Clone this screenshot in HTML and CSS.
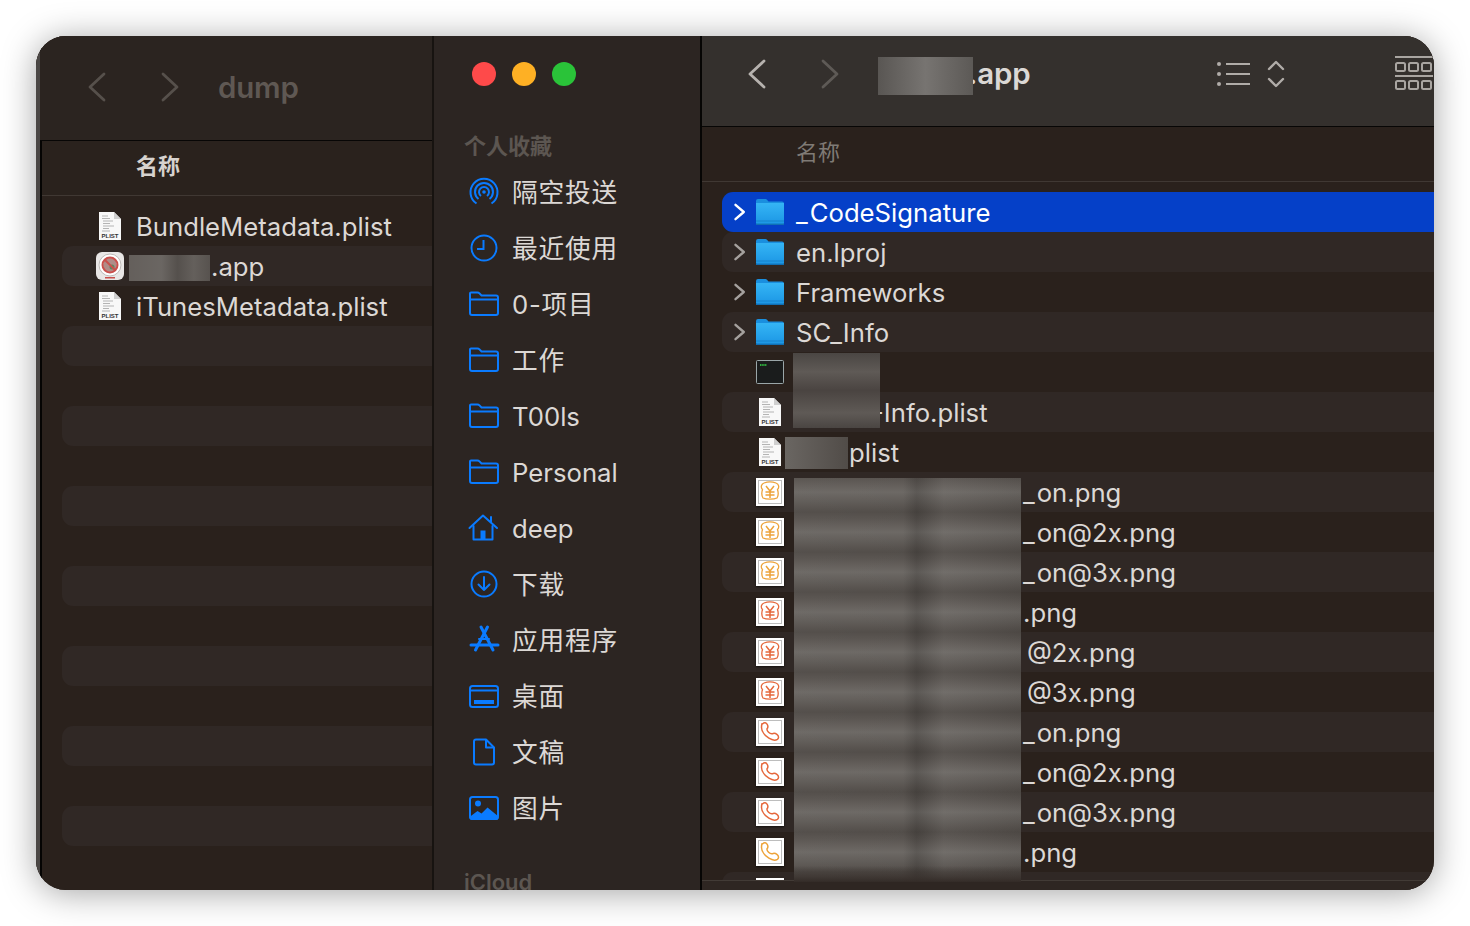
FILE: index.html
```html
<!DOCTYPE html>
<html lang="zh">
<head>
<meta charset="utf-8">
<title>Finder</title>
<link rel="stylesheet" href="styles.css">
</head>
<body>
<svg class="defs" width="0" height="0" aria-hidden="true">
  <defs>
    <linearGradient id="fg" x1="0" y1="0" x2="0" y2="1"><stop offset="0" stop-color="#35b5f5"/><stop offset="1" stop-color="#1b95e4"/></linearGradient>
    <symbol id="folder" viewBox="0 0 28 28">
      <path d="M0 3a2 2 0 0 1 2-2h7.500a2 2 0 0 1 1.500.7L12.500 3.500H26a2 2 0 0 1 2 2v2H0z" fill="#1a8fdf"/>
      <path d="M0 5h28v20a2 2 0 0 1-2 2H2a2 2 0 0 1-2-2z" fill="url(#fg)"/>
      <rect y="22.500" width="28" height="1" fill="#1780cc"/>
      <rect y="25.600" width="28" height="1.400" fill="#0f6fb5"/>
    </symbol>
    <symbol id="plist" viewBox="0 0 28 30">
      <path d="M3 1h15l7 7v21H3z" fill="#f8f8f8"/>
      <path d="M18 1l7 7h-7z" fill="#cfcfcf"/>
      <path d="M6 5h6M6 7.500h8M7 10h10M7 12.500h7M7 15h11M7 17.500h6M6 20h8" stroke="#b4b4b4" stroke-width="1"/>
      <text x="14" y="27" text-anchor="middle" class="plist-label">PLIST</text>
    </symbol>
    <symbol id="yen" viewBox="0 0 28 28">
      <rect width="28" height="28" fill="#fff"/>
      <rect x="2.500" y="2.500" width="23" height="23" fill="none" stroke="#bdbdbd"/>
      <path d="M8 5c4-1.500 8-1.500 12 0 3 1 3.500 4.500 1.500 6.500 1 3 1 6-.5 8.500-3 1.500-11 1.500-14 0-1.500-2.500-1.500-5.500-.5-8.500-2-2-1.500-5.500 1.500-6.500z" fill="none" stroke="currentColor" stroke-width="1.300"/>
      <path d="M10 8l4 5 4-5M9.500 14h9M9.500 17h9M14 13v7" fill="none" stroke="currentColor" stroke-width="1.500"/>
    </symbol>
    <symbol id="phone" viewBox="0 0 28 28">
      <rect width="28" height="28" fill="#fff"/>
      <rect x="2.500" y="2.500" width="23" height="23" fill="none" stroke="#bdbdbd"/>
      <path d="M6.500 5.800c1.800-1.500 3.800-1.300 4.800.7 .8 1.600 .8 3.200-.3 4.300-.3 2.200 2.700 5.300 5.200 5 1.500-.8 3.200-.6 4.700.5 2.100 1.500 2.100 3.900 .5 5-2.100 1.300-5.300.9-8.500-1.100-4.300-2.800-7.400-6.800-7.400-10.700 0-1.500 .2-2.700 .5-3.700z" fill="none" stroke="currentColor" stroke-width="1.500"/>
    </symbol>
    <symbol id="chev-r" viewBox="0 0 14 18"><path d="M2.500 1.800L10.800 9l-8.300 7.200" fill="none" stroke="currentColor" stroke-width="2.400" stroke-linecap="round" stroke-linejoin="round"/></symbol>
    <symbol id="nav-l" viewBox="0 0 20 32"><path d="M17 3L3 16l14 13" fill="none" stroke="currentColor" stroke-width="2.800" stroke-linecap="round" stroke-linejoin="round"/></symbol>
    <symbol id="nav-r" viewBox="0 0 20 32"><path d="M3 3l14 13L3 29" fill="none" stroke="currentColor" stroke-width="2.800" stroke-linecap="round" stroke-linejoin="round"/></symbol>
    <symbol id="side-folder" viewBox="0 0 32 32"><path d="M3 4.500h6.500c.8 0 1.400.3 2 .9L13.500 7.500H28a2 2 0 0 1 2 2V25a2 2 0 0 1-2 2H4a2 2 0 0 1-2-2V5.500a1 1 0 0 1 1-1zM2 11.500h28" fill="none" stroke="currentColor" stroke-width="2"/></symbol>
  </defs>
</svg>

<main class="window">
  <section class="pane pane-left">
    <header class="toolbar toolbar-left">
      <svg class="nav nav-dim nav-a"><use href="#nav-l"/></svg>
      <svg class="nav nav-dim nav-b"><use href="#nav-r"/></svg>
      <h1 class="title title-dim">dump</h1>
    </header>
    <div class="colhead colhead-left">名称</div>
    <div class="list list-left">
      <div class="row row-l"><svg class="ico plist-ico"><use href="#plist"/></svg><span class="name">BundleMetadata.plist</span></div>
      <div class="row row-l stripe">
        <svg class="ico" viewBox="0 0 28 28">
          <rect width="28" height="28" rx="6" fill="#e9e7e6"/>
          <circle cx="14" cy="13" r="11" fill="#fff" stroke="#bdb9b7"/>
          <circle cx="14" cy="13" r="7" fill="#b08c88"/>
          <circle cx="16" cy="15" r="2.500" fill="#5c8a62"/>
          <circle cx="14" cy="13" r="7.500" fill="none" stroke="#c9504c" stroke-width="2"/>
          <path d="M9 8l10 10" stroke="#c9504c" stroke-width="2"/>
          <rect x="9" y="25" width="10" height="1.500" fill="#c9504c"/>
        </svg>
        <span class="name name-app">.app</span>
      </div>
      <div class="row row-l"><svg class="ico plist-ico"><use href="#plist"/></svg><span class="name">iTunesMetadata.plist</span></div>
      <div class="row row-l stripe"></div>
      <div class="row row-l"></div>
      <div class="row row-l stripe"></div>
      <div class="row row-l"></div>
      <div class="row row-l stripe"></div>
      <div class="row row-l"></div>
      <div class="row row-l stripe"></div>
      <div class="row row-l"></div>
      <div class="row row-l stripe"></div>
      <div class="row row-l"></div>
      <div class="row row-l stripe"></div>
      <div class="row row-l"></div>
      <div class="row row-l stripe"></div>
    </div>
    <div class="redact redact-left"></div>
  </section>

  <nav class="sidebar">
    <div class="lights"><i class="light red"></i><i class="light yellow"></i><i class="light green"></i></div>
    <div class="side-label">个人收藏</div>
    <a class="side-item"><svg class="side-ico" viewBox="0 0 32 32" fill="none" stroke="currentColor" stroke-width="2"><path d="M8.500 27.500a13.500 13.500 0 1 1 15 0"/><path d="M10.500 23a9 9 0 1 1 11 0"/><path d="M13 20a5 5 0 1 1 6 0"/><circle cx="16" cy="16" r="1.800" fill="currentColor" stroke="none"/></svg>隔空投送</a>
    <a class="side-item"><svg class="side-ico" viewBox="0 0 32 32" fill="none" stroke="currentColor" stroke-width="2"><circle cx="16" cy="16" r="12.500"/><path d="M15.500 8v9H9"/></svg>最近使用</a>
    <a class="side-item"><svg class="side-ico"><use href="#side-folder"/></svg>0-项目</a>
    <a class="side-item"><svg class="side-ico"><use href="#side-folder"/></svg>工作</a>
    <a class="side-item latin"><svg class="side-ico"><use href="#side-folder"/></svg>T00ls</a>
    <a class="side-item latin"><svg class="side-ico"><use href="#side-folder"/></svg>Personal</a>
    <a class="side-item latin"><svg class="side-ico" viewBox="0 0 32 32" fill="none" stroke="currentColor" stroke-width="2" stroke-linecap="round" stroke-linejoin="round"><path d="M1.500 16L15 3.500 29 16"/><path d="M5.500 14v13.500h19V14"/><path d="M23 5v5"/><rect x="12.500" y="18.500" width="5" height="9" fill="currentColor" stroke="none"/></svg>deep</a>
    <a class="side-item"><svg class="side-ico" viewBox="0 0 32 32" fill="none" stroke="currentColor" stroke-width="2" stroke-linecap="round" stroke-linejoin="round"><circle cx="16" cy="16" r="12.500"/><path d="M16 9v13M10.500 16.500L16 22l5.500-5.500"/></svg>下载</a>
    <a class="side-item"><svg class="side-ico" viewBox="0 0 32 32" fill="none" stroke="currentColor" stroke-linecap="round"><path d="M19.500 3L7.500 26" stroke-width="3"/><path d="M13 3l12 23" stroke-width="3"/><path d="M3 21h27" stroke-width="3"/><path d="M11 15h10" stroke-width="2"/></svg>应用程序</a>
    <a class="side-item"><svg class="side-ico" viewBox="0 0 32 32" fill="none" stroke="currentColor" stroke-width="2"><rect x="2" y="6" width="28" height="21" rx="2.500"/><path d="M2 10.500h28"/><rect x="6" y="20" width="20" height="4" fill="currentColor" stroke="none"/></svg>桌面</a>
    <a class="side-item"><svg class="side-ico" viewBox="0 0 32 32" fill="none" stroke="currentColor" stroke-width="2" stroke-linejoin="round"><path d="M8 3.500h10l8 8v15a2 2 0 0 1-2 2H8a2 2 0 0 1-2-2v-21a2 2 0 0 1 2-2z"/><path d="M18 3.500v8h8"/></svg>文稿</a>
    <a class="side-item"><svg class="side-ico" viewBox="0 0 32 32"><rect x="2" y="5" width="28" height="22" rx="2.500" fill="none" stroke="currentColor" stroke-width="2"/><circle cx="10" cy="11.500" r="3" fill="currentColor"/><path d="M1.500 25l8-6 4 2.500 6-6 11 9v1a2.500 2.500 0 0 1-2.500 2.500H4A2.500 2.500 0 0 1 1.500 25z" fill="currentColor"/></svg>图片</a>
    <div class="side-label side-label-icloud">iCloud</div>
  </nav>

  <section class="pane pane-right">
    <header class="toolbar toolbar-right">
      <svg class="nav nav-on"><use href="#nav-l"/></svg>
      <svg class="nav nav-off nav-c"><use href="#nav-r"/></svg>
      <h1 class="title title-on">.app</h1>
      <svg class="tool-list" viewBox="0 0 36 26" fill="none" stroke="currentColor" stroke-width="2"><circle cx="3" cy="3" r="2" fill="currentColor" stroke="none"/><circle cx="3" cy="13" r="2" fill="currentColor" stroke="none"/><circle cx="3" cy="23" r="2" fill="currentColor" stroke="none"/><path d="M10 3h24M10 13h24M10 23h24"/></svg>
      <svg class="tool-sort" viewBox="0 0 18 28" fill="none" stroke="currentColor" stroke-width="2.400" stroke-linecap="round" stroke-linejoin="round"><path d="M2 9l7-7 7 7M2 19l7 7 7-7"/></svg>
      <svg class="tool-grid" viewBox="0 0 38 36" fill="none" stroke="currentColor" stroke-width="2"><path d="M0 1h38M0 20h38"/><rect x="1" y="7" width="9" height="8" rx="1.500"/><rect x="14" y="7" width="9" height="8" rx="1.500"/><rect x="27" y="7" width="9" height="8" rx="1.500"/><rect x="1" y="25" width="9" height="8" rx="1.500"/><rect x="14" y="25" width="9" height="8" rx="1.500"/><rect x="27" y="25" width="9" height="8" rx="1.500"/></svg>
    </header>
    <div class="colhead colhead-right">名称</div>
    <div class="list list-right">
      <div class="row row-r selected"><svg class="chev chev-on"><use href="#chev-r"/></svg><svg class="ico"><use href="#folder"/></svg><span class="name"><span class="us">_</span>CodeSignature</span></div>
      <div class="row row-r stripe"><svg class="chev"><use href="#chev-r"/></svg><svg class="ico"><use href="#folder"/></svg><span class="name">en.lproj</span></div>
      <div class="row row-r"><svg class="chev"><use href="#chev-r"/></svg><svg class="ico"><use href="#folder"/></svg><span class="name">Frameworks</span></div>
      <div class="row row-r stripe"><svg class="chev"><use href="#chev-r"/></svg><svg class="ico"><use href="#folder"/></svg><span class="name">SC_Info</span></div>
      <div class="row row-r"><span class="chev"></span><svg class="ico ico-term" viewBox="0 0 28 24"><rect x=".5" y=".5" width="27" height="23" rx="1" fill="#1a1c1c" stroke="#9aa6a8"/><path d="M4 5h7" stroke="#2fae3e" stroke-width="2" stroke-dasharray="1.500 .7"/></svg><span class="name"></span></div>
      <div class="row row-r stripe"><span class="chev"></span><svg class="ico plist-ico"><use href="#plist"/></svg><span class="name name-info">-Info.plist</span></div>
      <div class="row row-r"><span class="chev"></span><svg class="ico plist-ico"><use href="#plist"/></svg><span class="name name-plist">plist</span></div>
      <div class="row row-r stripe"><span class="chev"></span><svg class="ico thumb amber"><use href="#yen"/></svg><span class="name name-long"><span class="us">_</span>on.png</span></div>
      <div class="row row-r"><span class="chev"></span><svg class="ico thumb amber"><use href="#yen"/></svg><span class="name name-long"><span class="us">_</span>on@2x.png</span></div>
      <div class="row row-r stripe"><span class="chev"></span><svg class="ico thumb amber"><use href="#yen"/></svg><span class="name name-long"><span class="us">_</span>on@3x.png</span></div>
      <div class="row row-r"><span class="chev"></span><svg class="ico thumb coral"><use href="#yen"/></svg><span class="name name-long">.png</span></div>
      <div class="row row-r stripe"><span class="chev"></span><svg class="ico thumb coral"><use href="#yen"/></svg><span class="name name-at">@2x.png</span></div>
      <div class="row row-r"><span class="chev"></span><svg class="ico thumb coral"><use href="#yen"/></svg><span class="name name-at">@3x.png</span></div>
      <div class="row row-r stripe"><span class="chev"></span><svg class="ico thumb coral"><use href="#phone"/></svg><span class="name name-long"><span class="us">_</span>on.png</span></div>
      <div class="row row-r"><span class="chev"></span><svg class="ico thumb coral"><use href="#phone"/></svg><span class="name name-long"><span class="us">_</span>on@2x.png</span></div>
      <div class="row row-r stripe"><span class="chev"></span><svg class="ico thumb coral"><use href="#phone"/></svg><span class="name name-long"><span class="us">_</span>on@3x.png</span></div>
      <div class="row row-r"><span class="chev"></span><svg class="ico thumb amber"><use href="#phone"/></svg><span class="name name-long">.png</span></div>
      <div class="row row-r stripe"><span class="chev"></span><svg class="ico thumb amber"><use href="#phone"/></svg><span class="name"></span></div>
    </div>
    <div class="footer"></div>
    <div class="redact redact-title"></div>
    <div class="redact redact-bin"></div>
    <div class="redact redact-plist"></div>
    <div class="redact redact-big"></div>
  </section>
</main>
</body>
</html>
```
FILE: styles.css
```css
* { box-sizing: border-box; }
html, body { margin: 0; height: 926px; overflow: hidden; }
body {
  background: #fff;
  padding: 36px;
  font-family: Inter, "Noto Sans CJK SC", sans-serif;
}
.defs { position: absolute; }
.plist-label { font: 700 6px "Liberation Sans", sans-serif; fill: #333; }

.window {
  display: flex;
  width: 1398px;
  height: 854px;
  border-radius: 30px;
  overflow: hidden;
  background: #2a211c;
  box-shadow: 0 3px 34px rgba(0, 0, 0, .36);
}

.pane { position: relative; display: flex; flex-direction: column; background: #2a211c; }
.pane-left {
  flex: 0 0 396px;
  border-left: 4px solid #4b4745;
}
.pane-left::before {
  content: "";
  position: absolute;
  left: 0; top: 0; bottom: 0;
  width: 2px;
  background: #050403;
}
.pane-right { flex: 1; min-width: 0; border-left: 2px solid #060504; }

.toolbar { position: relative; display: flex; align-items: center; flex: none; }
.toolbar-left { height: 105px; padding: 0 0 2px 47px; background: #2b2420; border-bottom: 1px solid #070605; }
.toolbar-right { height: 91px; padding: 0 0 15px 45px; background: #34302d; border-bottom: 1px solid #070605; }

.nav { width: 20px; height: 32px; flex: none; }
.nav-dim { color: #56504b; }
.nav-on { color: #b6b2ae; }
.nav-off { color: #5e5a56; }
.nav-a { margin-right: 53px; }
.nav-b { margin-right: 38px; }
.nav-c { margin-left: 53px; }
.title { margin: 0; font-size: 29.500px; font-weight: 600; letter-spacing: -.2px; }
.title-dim { color: #5f5853; }
.title-on { color: #dbd8d5; margin: 0 0 2px 128px; width: 248px; }

.tool-list { width: 36px; height: 26px; flex: none; color: #b0aca8; }
.tool-sort { width: 18px; height: 28px; flex: none; margin-left: 15px; color: #b0aca8; }
.tool-grid { width: 38px; height: 36px; flex: none; color: #a9a5a1; margin-left: 110px; }

.colhead { display: flex; align-items: center; flex: none; font-size: 22px; padding-bottom: 8px; border-bottom: 1px solid #403833; }
.colhead-left { height: 55px; padding-left: 96px; color: #d6d2ce; font-weight: 700; background: #2a221d; }
.colhead-right { height: 55px; padding-left: 94px; color: #7f7a75; background: #2a211c; }

.list { flex: 1; min-height: 0; overflow: hidden; padding-top: 10px; }
.list-left { padding-left: 22px; }
.list-right { padding-left: 20px; }
.footer { flex: none; height: 10px; background: #2e2622; border-top: 1px solid #423b36; }

.row {
  display: flex;
  align-items: center;
  height: 40px;
  font-size: 25.700px;
  color: #dcd8d5;
  border-radius: 11px 0 0 11px;
  white-space: nowrap;
}
.stripe { background: #302825; }
.selected { background: #0540c8; color: #fff; }
.row-l { padding-left: 34px; }
.chev { width: 14px; height: 18px; flex: none; margin: 0 9px 0 11px; color: #a5a19e; }
.chev-on { color: #fff; }
.ico { width: 28px; height: 28px; flex: none; display: block; }
.plist-ico { height: 30px; }
.ico-term { height: 24px; }
.thumb { box-shadow: 0 1px 2px rgba(0, 0, 0, .6); }
.amber { color: #eda33a; }
.coral { color: #e5683c; }
.name { margin-left: 12px; }
.us { letter-spacing: 2px; }
.name-app { margin-left: 87px; }
.name-info { margin-left: 88px; }
.name-plist { margin-left: 65px; }
.name-long { margin-left: 239px; }
.name-at { margin-left: 243px; }

.sidebar {
  flex: 0 0 268px;
  display: flex;
  flex-direction: column;
  padding-left: 34px;
  background: #2c2522;
  border-left: 2px solid #171310;
}
.lights { display: flex; gap: 16px; flex: none; padding: 26px 0 0 4px; }
.light { width: 24px; height: 24px; border-radius: 50%; }
.red { background: #fe4a4a; }
.yellow { background: #feb024; }
.green { background: #2ac339; }
.side-label { flex: none; margin: 45px 0 0 -4px; height: 30px; line-height: 30px; font-size: 22px; font-weight: 600; color: #5c5651; }
.side-label-icloud { margin-top: 33px; }
.side-item { display: flex; align-items: center; gap: 12px; flex: none; height: 56px; font-size: 25.700px; letter-spacing: .8px; color: #dcd8d5; }
.side-label + .side-item { margin-top: 1px; }
.side-ico { width: 32px; height: 32px; flex: none; margin-top: 4px; color: #0a7bff; }
.latin { letter-spacing: 0; padding-top: 4px; }
.latin .side-ico { margin-top: 0; }

.redact {
  position: absolute;
  background:
    linear-gradient(90deg, rgba(255,255,255,.05), rgba(255,255,255,.09) 40%, rgba(0,0,0,.08) 60%, rgba(255,255,255,.05) 80%, rgba(0,0,0,.05)),
    #5c5753;
}
.redact-left { left: 89px; top: 219px; width: 81px; height: 26px; }
.redact-title { left: 176px; top: 21px; width: 95px; height: 38px; background: linear-gradient(90deg, #595653, #777471 50%, #5c5956); }
.redact-bin { left: 91px; top: 317px; width: 87px; height: 75px; background: linear-gradient(180deg, #4a4643, #5f5a56 25%, #4a4441 50%, #5f5a56 80%, #4a4542); }
.redact-plist { left: 83px; top: 401px; width: 63px; height: 32px; background: linear-gradient(90deg, #6a6662, #514c48); }
.redact-big {
  left: 92px;
  top: 442px;
  width: 227px;
  height: 404px;
  background:
    linear-gradient(180deg, transparent 96%, #332b27),
    linear-gradient(90deg, rgba(255,255,255,.03), rgba(255,255,255,.02) 48%, rgba(0,0,0,.12) 54%, rgba(255,255,255,.05) 66%, rgba(0,0,0,.03)),
    repeating-linear-gradient(180deg, #56514d 0, #6a6662 14px, #4f4a46 34px, #56514d 40px);
}
```
